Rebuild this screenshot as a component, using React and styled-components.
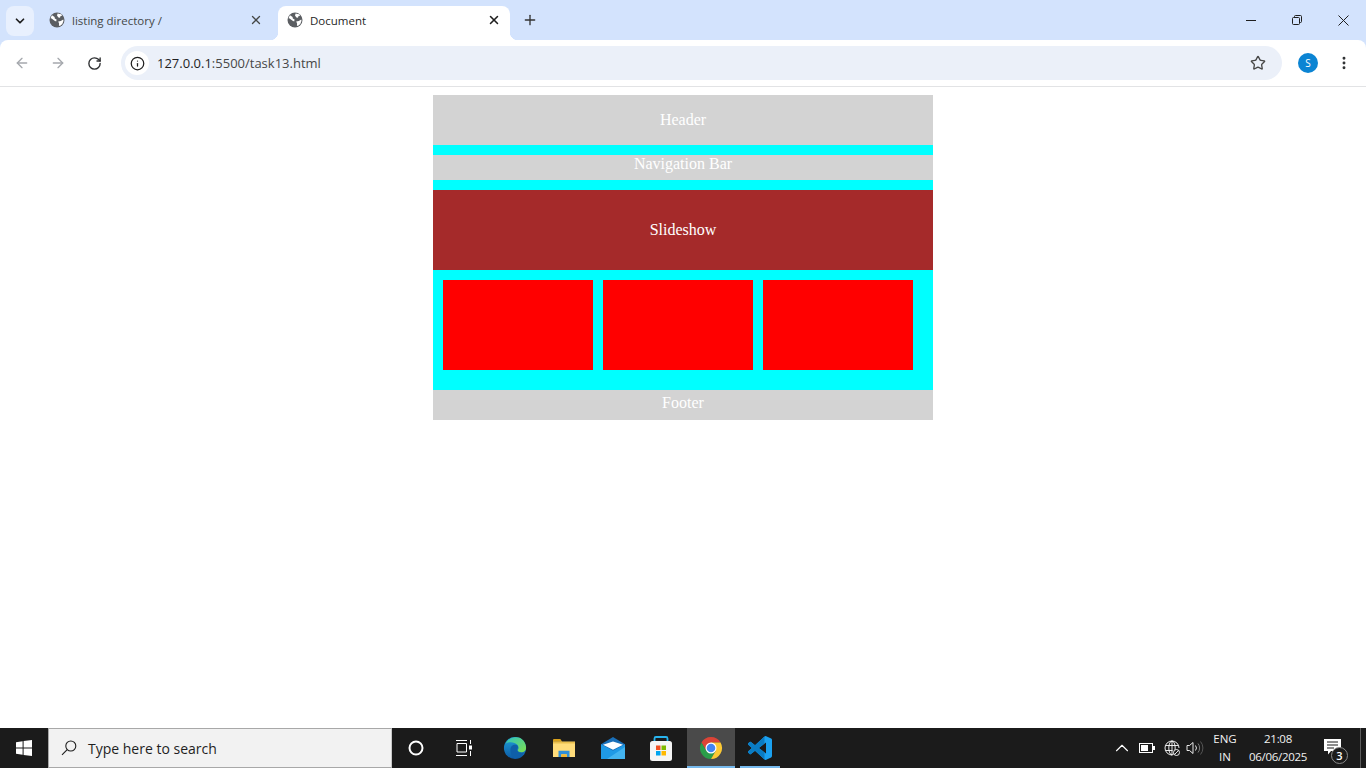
import React from 'react';
import styled, { createGlobalStyle } from 'styled-components';
import { ArrowLeft, ArrowRight, RotateCw, Info, Star, X, Plus, ChevronDown, ChevronUp, EllipsisVertical } from 'lucide-react';

const GlobalStyle = createGlobalStyle`
  html, body { margin: 0; padding: 0; height: 100%; overflow: hidden; background: #fff; }
  #root { height: 100%; }
`;

const uiFont = `"Open Sans", "Noto Sans", sans-serif`;

const Screen = styled.div`
  height: 768px;
  display: flex;
  flex-direction: column;
  background: #d3e3fd;
  font-family: ${uiFont};
`;

const TabStrip = styled.div`
  height: 40px;
  flex: none;
  display: flex;
  align-items: flex-end;
  padding-left: 6px;
  background: #d3e3fd;
  position: relative;
`;

const TabSearch = styled.button`
  width: 28px;
  height: 30px;
  border: 0;
  padding: 0;
  margin: 0 4px 4px 0;
  align-self: flex-end;
  border-radius: 8px;
  background: #e8f0fe;
  color: #1f1f1f;
  display: flex;
  align-items: center;
  justify-content: center;
`;

const Tab = styled.div`
  width: ${p => p.$width}px;
  height: 34px;
  flex: none;
  display: flex;
  align-items: center;
  padding: 0 ${p => p.$active ? '9px' : '15px'} 6px ${p => p.$active ? '9px' : '11px'};
  box-sizing: border-box;
  gap: 7px;
  border-radius: 8px 8px 0 0;
  background: ${p => p.$active ? '#fff' : 'transparent'};
  color: ${p => p.$active ? '#1f1f1f' : '#444746'};
  font-size: 11.5px;
  position: relative;
  ${p => p.$active && `
    &::before, &::after {
      content: '';
      position: absolute;
      bottom: 0;
      width: 8px;
      height: 8px;
    }
    &::before { left: -8px; background: radial-gradient(circle at 0 0, transparent 8px, #fff 8.5px); }
    &::after { right: -8px; background: radial-gradient(circle at 100% 0, transparent 8px, #fff 8.5px); }
  `}
`;

const TabTitle = styled.span`
  flex: 1;
  white-space: nowrap;
`;

const NewTab = styled.div`
  width: 28px;
  height: 28px;
  margin: 0 0 6px 6px;
  display: flex;
  align-items: center;
  justify-content: center;
  color: #333;
`;

const WindowControls = styled.div`
  margin-left: auto;
  align-self: flex-start;
  display: flex;
  color: #1f1f1f;
`;

const WindowButton = styled.div`
  width: 46px;
  height: 40px;
  display: flex;
  align-items: center;
  justify-content: center;
`;

const Toolbar = styled.div`
  height: 47px;
  flex: none;
  box-sizing: border-box;
  border-bottom: 1px solid #e2e3e5;
  border-radius: 8px 8px 0 0;
  background: #fff;
  display: flex;
  align-items: center;
  padding: 0 4px;
`;

const NavButton = styled.div`
  width: 36px;
  height: 34px;
  flex: none;
  display: flex;
  align-items: center;
  justify-content: center;
  color: ${p => p.$muted ? '#a5a8ad' : '#2f3133'};
`;

const AddressBar = styled.div`
  flex: 1;
  height: 34px;
  margin: 0 0 0 9px;
  border-radius: 17px;
  background: #ebf0f9;
  display: flex;
  align-items: center;
  padding: 0 6px 0 4px;
  font-size: 13px;
  color: #1f1f1f;
`;

const SiteInfo = styled.div`
  width: 24px;
  height: 24px;
  border-radius: 50%;
  background: #fff;
  display: flex;
  align-items: center;
  justify-content: center;
  margin-right: 8px;
`;

const UrlPath = styled.span`
  color: #474747;
`;

const BarEnd = styled.div`
  margin-left: auto;
  width: 36px;
  display: flex;
  justify-content: center;
  color: #474747;
`;

const Avatar = styled.div`
  width: 20px;
  height: 20px;
  margin: 0 8px 0 16px;
  border-radius: 50%;
  background: #0b84d3;
  color: #fff;
  font-size: 10px;
  display: flex;
  align-items: center;
  justify-content: center;
`;

const Viewport = styled.main`
  flex: 1;
  background: #fff;
  padding-top: 8px;
  display: flex;
  flex-direction: column;
  align-items: center;
`;

const Layout = styled.div`
  width: 500px;
  background: #00ffff;
  display: flex;
  flex-direction: column;
  color: #fff;
  font-family: "Liberation Serif", "Times New Roman", serif;
  font-size: 16px;
  line-height: 18px;
  text-align: center;
`;

const GrayBand = styled.div`
  height: ${p => p.$height}px;
  margin-bottom: ${p => p.$gap || 0}px;
  padding-top: ${p => p.$top}px;
  box-sizing: border-box;
  background: lightgray;
`;

const Slideshow = styled.div`
  height: 80px;
  box-sizing: border-box;
  padding-top: 31px;
  background: brown;
`;

const CardRow = styled.div`
  display: flex;
  gap: 10px;
  padding: 10px 10px 20px;
`;

const Card = styled.div`
  width: 150px;
  height: 90px;
  background: red;
`;

const Taskbar = styled.footer`
  height: 40px;
  flex: none;
  background: #1b1b1b;
  display: flex;
  align-items: stretch;
  color: #fff;
`;

const StartButton = styled.div`
  width: 48px;
  display: flex;
  align-items: center;
  justify-content: center;
`;

const SearchBox = styled.div`
  width: 344px;
  box-sizing: border-box;
  border: 1px solid #a8a8a8;
  border-right-color: #c8c8c8;
  background: #f2f2f2;
  color: #1f1f1f;
  font-size: 14px;
  display: flex;
  align-items: center;
  gap: 11px;
  padding-left: 12px;
`;

const TaskSlot = styled.div`
  width: ${p => p.$width || 48}px;
  margin-left: ${p => p.$left || 0}px;
  flex: none;
  position: relative;
  display: flex;
  align-items: center;
  justify-content: center;
  background: ${p => p.$active ? '#4a4a4a' : 'transparent'};
  ${p => p.$running && `
    &::after {
      content: '';
      position: absolute;
      bottom: 0;
      left: ${p.$active ? 0 : 4}px;
      right: ${p.$active ? 0 : 4}px;
      height: 2px;
      background: #76b9ed;
    }
  `}
`;

const Tray = styled.div`
  margin-left: auto;
  display: flex;
  align-items: stretch;
`;

const TraySlot = styled.div`
  width: ${p => p.$width}px;
  display: flex;
  align-items: center;
  justify-content: center;
  position: relative;
`;

const NotificationGlyph = styled.div`
  display: flex;
  margin-bottom: 3px;
`;

const TrayText = styled.div`
  width: ${p => p.$width}px;
  display: flex;
  flex-direction: column;
  align-items: center;
  justify-content: center;
  font-size: 11.5px;
  line-height: 18px;
  letter-spacing: ${p => p.$tight ? '-0.3px' : '0'};
  color: #f2f2f2;
`;

const Badge = styled.div`
  position: absolute;
  right: 5px;
  bottom: 4px;
  width: 17px;
  height: 17px;
  box-sizing: border-box;
  border-radius: 50%;
  border: 1px solid #8a8a8a;
  background: #1b1b1b;
  font-size: 11px;
  font-weight: 600;
  line-height: 15px;
  text-align: center;
`;

const ShowDesktop = styled.div`
  width: 5px;
  margin-left: 7px;
  border-left: 1px solid #5c5c5c;
`;

const GlobeIcon = () => (
  <svg width="16" height="16" viewBox="0 0 16 16">
    <circle cx="8" cy="8" r="7.5" fill="#5b5e62" />
    <path d="M3 3.2 5.6 5l.2 1.4L7.6 7.6 7.2 9.6 5.6 8.8 2.6 6.6 1.6 6.2A6.6 6.6 0 0 1 3 3.2ZM8.6 1.4l3.6.9 1 1.2-1.8.7-.4 1.6-1.6-.4L8 3.6Zm.6 8 2.6-.4 2.4-1.6.3 1.4-1.2 3.2-2.4 2-1-.6.2-2Z" fill="#fff" />
  </svg>
);

const WindowsLogo = () => (
  <svg width="16" height="16" viewBox="0 0 16 16" fill="#fff">
    <path d="M0 2.2 6.6 1.3v6.2H0ZM7.600 1.100 16 0v7.500H7.600ZM0 8.500h6.600v6.200L0 13.800ZM7.600 8.500H16V16l-8.400-1.100Z" />
  </svg>
);

const SearchIcon = () => (
  <svg width="16" height="16" viewBox="0 0 16 16" fill="none" stroke="#1f1f1f" strokeWidth="1.1">
    <circle cx="9.800" cy="6" r="5" />
    <path d="M6.200 9.600 1 14.800" />
  </svg>
);

const CortanaIcon = () => (
  <svg width="16" height="16" viewBox="0 0 16 16" fill="none">
    <circle cx="8" cy="8" r="6.500" stroke="#fff" strokeWidth="2" />
  </svg>
);

const TaskViewIcon = () => (
  <svg width="16" height="16" viewBox="0 0 16 16" fill="none" stroke="#fff" strokeWidth="1">
    <path d="M0 .5h11M0 15.500h11M1 3.500h9.500v8.500H1z" />
    <path d="M14.500 0v4M14.500 11v5" />
    <rect x="13" y="5.500" width="3" height="4" fill="#fff" stroke="none" />
  </svg>
);

const EdgeIcon = () => (
  <svg width="24" height="24" viewBox="0 0 26 26">
    <defs>
      <linearGradient id="edgeBlue" x1="0" y1="0" x2="0" y2="1">
        <stop offset="0" stopColor="#1fa0d8" />
        <stop offset="1" stopColor="#0c59a4" />
      </linearGradient>
      <linearGradient id="edgeGreen" x1="0" y1="0" x2="1" y2="1">
        <stop offset="0" stopColor="#2fc3c0" />
        <stop offset="1" stopColor="#7fe04f" />
      </linearGradient>
    </defs>
    <circle cx="13" cy="13" r="12" fill="url(#edgeBlue)" />
    <path d="M3 8C6 2 13 0 18 2c4 2 7 6 7 11 0 3-2 4.500-5 4.500-2.500 0-4.500-1-4-2.500 1-1 1.500-3-.5-5.500C13 7 8 5.500 3 8Z" fill="url(#edgeGreen)" />
    <path d="M8 15c0-4 3-6 6-5.500 2 .5 3 2.500 1.500 4.500-1 2 1.500 4.500 5 4.500 1 0 1.500 0 2-.5-2 4-6 6.500-10 6-3-.5-4.500-5-4.500-9Z" fill="#0f5fa8" />
  </svg>
);

const ExplorerIcon = () => (
  <svg width="22" height="18" viewBox="0 0 24 20" preserveAspectRatio="none">
    <path d="M0 1a1 1 0 0 1 1-1h7l2 3H0Z" fill="#d9a11c" />
    <rect x="0" y="3" width="24" height="17" fill="#ffdc7a" />
    <rect x="0" y="3" width="24" height="2" fill="#eabf4e" />
    <path d="M6 20v-7h12v7h-3v-3H9v3Z" fill="#2f8fd8" />
    <rect x="9" y="17" width="6" height="3" fill="#f2b632" />
  </svg>
);

const MailIcon = () => (
  <svg width="24" height="22" viewBox="0 0 24 24" preserveAspectRatio="none">
    <path d="M0 8 12 0l12 8v16H0Z" fill="#1a6fb8" />
    <path d="M2 8.500 12 5l10 3.500L12 14Z" fill="#fff" />
    <path d="M0 8 12 15 24 8v16H0Z" fill="#1f9ae6" />
    <path d="M24 24H6L24 11Z" fill="#43b4f0" />
  </svg>
);

const StoreIcon = () => (
  <svg width="24" height="25" viewBox="0 0 24 25">
    <path d="M5.500 7V2.500a1.500 1.500 0 0 1 1.500-1.500h10a1.500 1.500 0 0 1 1.500 1.500V7" fill="none" stroke="#28b4ee" strokeWidth="1.800" />
    <rect x="1" y="5" width="22" height="20" rx="2.500" fill="#f5f5f5" />
    <rect x="7" y="9.500" width="4.500" height="4.500" fill="#f25022" />
    <rect x="12.500" y="9.500" width="4.500" height="4.500" fill="#7fba00" />
    <rect x="7" y="15" width="4.500" height="4.500" fill="#00a4ef" />
    <rect x="12.500" y="15" width="4.500" height="4.500" fill="#ffb900" />
  </svg>
);

const ChromeIcon = () => (
  <svg width="24" height="24" viewBox="0 0 24 24">
    <path d="M21.530 6.500A11 11 0 0 0 2.470 6.500L7.240 14.750 12 12V6.500Z" fill="#db4437" />
    <path d="M2.470 6.500A11 11 0 0 0 12 23L16.760 14.750 12 12 7.240 14.750Z" fill="#2a9d4a" />
    <path d="M12 23A11 11 0 0 0 21.530 6.500H12V12L16.760 14.750Z" fill="#fcc934" />
    <circle cx="12" cy="12" r="5.500" fill="#fff" />
    <circle cx="12" cy="12" r="4.300" fill="#4285f4" />
  </svg>
);

const VsCodeIcon = () => (
  <svg width="24" height="24" viewBox="0 0 24 24">
    <defs>
      <clipPath id="vsLeft"><rect x="0" y="0" width="16.500" height="24" /></clipPath>
    </defs>
    <path fill="#1ba1f0" d="M23.150 2.587 18.210.21a1.494 1.494 0 0 0-1.705.29l-9.460 8.630-4.120-3.128a.999.999 0 0 0-1.276.057L.327 7.261A1 1 0 0 0 .326 8.740L3.899 12 .326 15.260a1 1 0 0 0 .001 1.479L1.650 17.940a.999.999 0 0 0 1.276.057l4.120-3.128 9.460 8.630a1.492 1.492 0 0 0 1.704.29l4.942-2.377A1.500 1.500 0 0 0 24 20.060V3.939a1.500 1.500 0 0 0-.850-1.352zm-5.146 14.861L10.826 12l7.178-5.448v10.896z" />
    <path clipPath="url(#vsLeft)" fill="#0a7cc4" d="M23.150 2.587 18.210.21a1.494 1.494 0 0 0-1.705.29l-9.460 8.630-4.120-3.128a.999.999 0 0 0-1.276.057L.327 7.261A1 1 0 0 0 .326 8.740L3.899 12 .326 15.260a1 1 0 0 0 .001 1.479L1.650 17.940a.999.999 0 0 0 1.276.057l4.120-3.128 9.460 8.630a1.492 1.492 0 0 0 1.704.29l4.942-2.377A1.500 1.500 0 0 0 24 20.060V3.939a1.500 1.500 0 0 0-.850-1.352zm-5.146 14.861L10.826 12l7.178-5.448v10.896z" />
  </svg>
);

const BatteryIcon = () => (
  <svg width="16" height="10" viewBox="0 0 16 10" fill="none">
    <rect x=".5" y=".5" width="13" height="9" stroke="#fff" />
    <rect x="2" y="2" width="7" height="6" fill="#fff" />
    <rect x="14" y="3" width="2" height="4" fill="#fff" />
  </svg>
);

const NetworkIcon = () => (
  <svg width="16" height="16" viewBox="0 0 16 16" fill="none" stroke="#fff" strokeWidth=".9">
    <path d="M8 15A7 7 0 1 1 15 8" />
    <ellipse cx="8" cy="8" rx="3.200" ry="7" />
    <path d="M1.500 5.500h13M1.500 10.500h7M8 1v14" />
    <circle cx="12.500" cy="12.500" r="3" fill="#1b1b1b" />
    <path d="M10.500 14.500l4-4" />
  </svg>
);

const SpeakerIcon = () => (
  <svg width="18" height="16" viewBox="0 0 18 16" fill="none" stroke="#fff" strokeWidth=".9">
    <path d="M1 5.500h2.500L7 2.500v11l-3.500-3H1Z" />
    <path d="M9.500 5.500a4 4 0 0 1 0 5" />
    <path d="M12 3.500a7 7 0 0 1 0 9" stroke="#8a8a8a" />
    <path d="M14.500 1.500a10 10 0 0 1 0 13" stroke="#5c5c5c" />
  </svg>
);

const NotificationIcon = () => (
  <svg width="17" height="16" viewBox="0 0 17 16">
    <path d="M0 0h17v12H7l-3 3.500V12H0Z" fill="#fff" />
    <path d="M3 3h11M3 6h11M3 9h7" stroke="#1b1b1b" strokeWidth="1" />
  </svg>
);

const App = () => (
  <Screen>
    <GlobalStyle />
    <TabStrip>
      <TabSearch><ChevronDown size={14} strokeWidth={3} /></TabSearch>
      <Tab $width={240}>
        <GlobeIcon />
        <TabTitle>listing directory /</TabTitle>
        <X size={14} strokeWidth={2.2} />
      </Tab>
      <Tab $active $width={232}>
        <GlobeIcon />
        <TabTitle>Document</TabTitle>
        <X size={14} strokeWidth={2.6} />
      </Tab>
      <NewTab><Plus size={16} strokeWidth={2} /></NewTab>
      <WindowControls>
        <WindowButton>
          <svg width="10" height="1" viewBox="0 0 10 1"><rect width="10" height="1" fill="#1f1f1f" /></svg>
        </WindowButton>
        <WindowButton>
          <svg width="10" height="10" viewBox="0 0 10 10" fill="none" stroke="#1f1f1f">
            <rect x=".5" y="2.500" width="7" height="7" rx="1" />
            <path d="M2.500 2V1.500a1 1 0 0 1 1-1h5a1 1 0 0 1 1 1v5a1 1 0 0 1-1 1H8" />
          </svg>
        </WindowButton>
        <WindowButton>
          <svg width="11" height="11" viewBox="0 0 11 11" stroke="#1f1f1f"><path d="M.5.5l10 10M10.500.5l-10 10" /></svg>
        </WindowButton>
      </WindowControls>
    </TabStrip>
    <Toolbar>
      <NavButton $muted><ArrowLeft size={16} strokeWidth={2} /></NavButton>
      <NavButton $muted><ArrowRight size={16} strokeWidth={2} /></NavButton>
      <NavButton><RotateCw size={15} strokeWidth={2.2} /></NavButton>
      <AddressBar>
        <SiteInfo><Info size={15} strokeWidth={2} color="#1f1f1f" /></SiteInfo>
        <span>127.0.0.1<UrlPath>:5500/task13.html</UrlPath></span>
        <BarEnd><Star size={16} strokeWidth={2} /></BarEnd>
      </AddressBar>
      <Avatar>S</Avatar>
      <NavButton><EllipsisVertical size={16} strokeWidth={2.4} /></NavButton>
    </Toolbar>
    <Viewport>
      <Layout>
        <GrayBand $height={50} $top={16} $gap={10}>Header</GrayBand>
        <GrayBand $height={25} $top={0} $gap={10}>Navigation Bar</GrayBand>
        <Slideshow>Slideshow</Slideshow>
        <CardRow>
          <Card />
          <Card />
          <Card />
        </CardRow>
        <GrayBand $height={30} $top={4}>Footer</GrayBand>
      </Layout>
    </Viewport>
    <Taskbar>
      <StartButton><WindowsLogo /></StartButton>
      <SearchBox>
        <SearchIcon />
        Type here to search
      </SearchBox>
      <TaskSlot><CortanaIcon /></TaskSlot>
      <TaskSlot><TaskViewIcon /></TaskSlot>
      <TaskSlot $left={3}><EdgeIcon /></TaskSlot>
      <TaskSlot $left={1}><ExplorerIcon /></TaskSlot>
      <TaskSlot $left={1}><MailIcon /></TaskSlot>
      <TaskSlot><StoreIcon /></TaskSlot>
      <TaskSlot $left={2} $active $running><ChromeIcon /></TaskSlot>
      <TaskSlot $left={1} $running><VsCodeIcon /></TaskSlot>
      <Tray>
        <TraySlot $width={24}><ChevronUp size={22} strokeWidth={1.2} /></TraySlot>
        <TraySlot $width={26}><BatteryIcon /></TraySlot>
        <TraySlot $width={24}><NetworkIcon /></TraySlot>
        <TraySlot $width={22}><SpeakerIcon /></TraySlot>
        <TrayText $width={38}><span>ENG</span><span>IN</span></TrayText>
        <TrayText $width={68} $tight><span>21:08</span><span>06/06/2025</span></TrayText>
        <TraySlot $width={41}>
          <NotificationGlyph><NotificationIcon /></NotificationGlyph>
          <Badge>3</Badge>
        </TraySlot>
        <ShowDesktop />
      </Tray>
    </Taskbar>
  </Screen>
);

export default App;
